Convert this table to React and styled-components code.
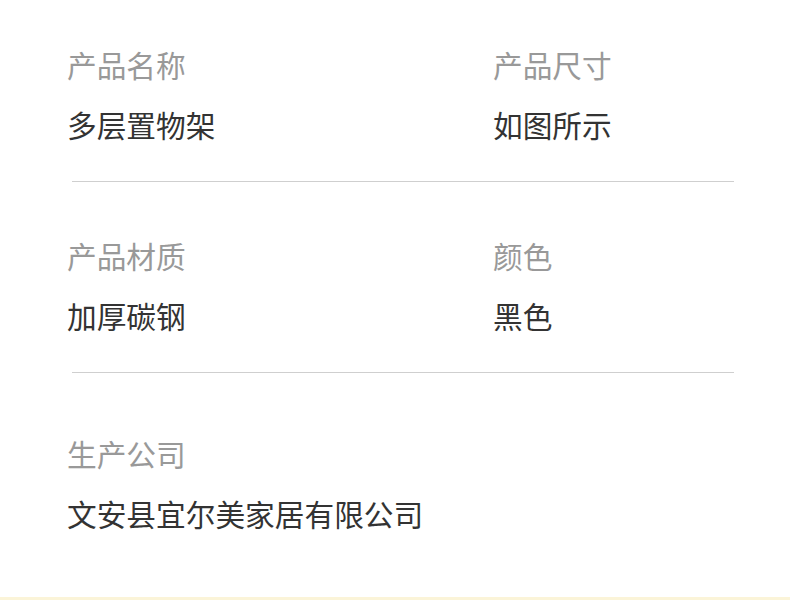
import React from 'react';
import styled, { createGlobalStyle } from 'styled-components';

const GlobalStyle = createGlobalStyle`
  html, body {
    margin: 0;
    padding: 0;
    background: #fff;
  }
  body {
    font-family: "Noto Sans CJK SC", "Noto Sans", sans-serif;
  }
`

const Page = styled.div`
  width: 790px;
  background: #fff;
`

const Row = styled.section`
  display: grid;
  grid-template-columns: 426px 1fr;
  padding: ${p => p.$top}px 0 ${p => p.$bottom}px 67px;
`

const Item = styled.div`
  display: flex;
  flex-direction: column;
  gap: 20px;
`

const Label = styled.div`
  font-size: 29.7px;
  line-height: 40px;
  color: #999;
`

const Value = styled.div`
  font-size: 29.7px;
  line-height: 40px;
  color: #333;
`

const Divider = styled.hr`
  margin: 0 56px 0 72px;
  border: none;
  border-top: 1px solid #cfcfcf;
`

const Strip = styled.div`
  height: 10px;
  background: #fbf4d8;
`

const rows = [
  { top: 45, bottom: 36, items: [['产品名称', '多层置物架'], ['产品尺寸', '如图所示']] },
  { top: 54, bottom: 36, items: [['产品材质', '加厚碳钢'], ['颜色', '黑色']] },
  { top: 61, bottom: 63, items: [['生产公司', '文安县宜尔美家居有限公司']] },
]

const App = () => {
  return (
    <Page>
      <GlobalStyle />
      {rows.map((row, i) => (
        <React.Fragment key={i}>
          <Row $top={row.top} $bottom={row.bottom}>
            {row.items.map(([label, value]) => (
              <Item key={label}>
                <Label>{label}</Label>
                <Value>{value}</Value>
              </Item>
            ))}
          </Row>
          {i < rows.length - 1 && <Divider />}
        </React.Fragment>
      ))}
      <Strip />
    </Page>
  )
}

export default App;
